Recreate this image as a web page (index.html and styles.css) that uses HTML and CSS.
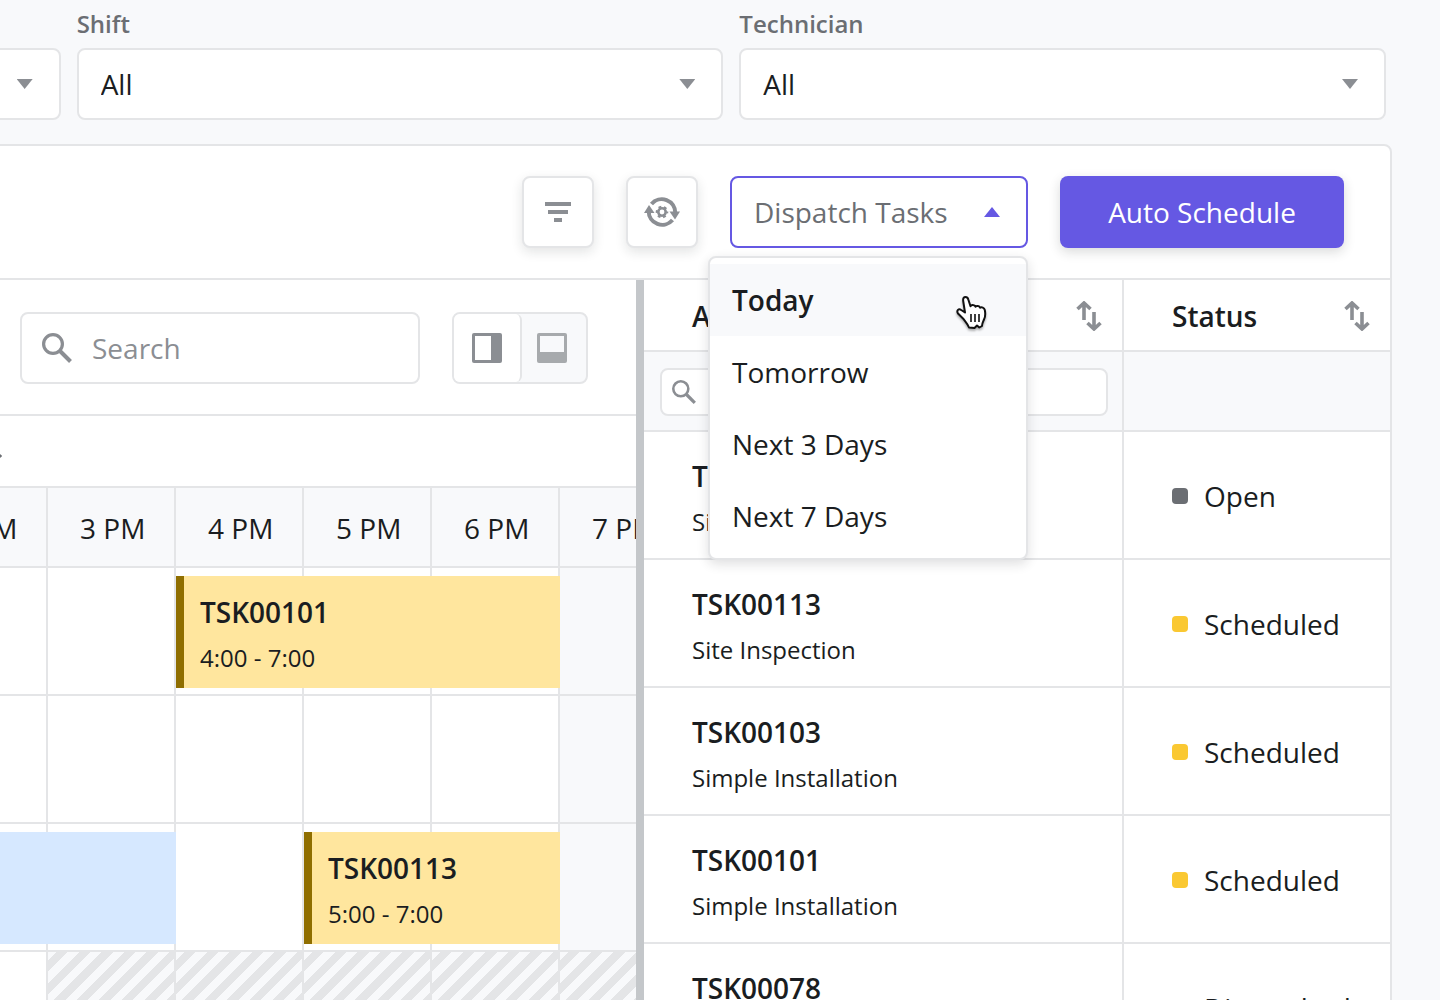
FILE: index.html
```html
<!DOCTYPE html>
<html lang="en">
<head>
    <meta charset="UTF-8">
    <meta name="viewport" content="width=device-width, initial-scale=1.0">
    <title>Dispatch Schedule</title>
    <link rel="stylesheet" href="styles.css">
</head>
<body>

<svg class="sprite" aria-hidden="true">
    <symbol id="icon-search" viewBox="0 0 30 30">
        <circle cx="11" cy="11" r="9.4" fill="none" stroke="currentColor" stroke-width="3.2"/>
        <path d="M17.5 17.5 28.5 28.5" stroke="currentColor" stroke-width="4"/>
    </symbol>
    <symbol id="icon-sort" viewBox="0 0 26 30">
        <path d="M8 19V2.5M1.5 8 8 2l6.5 6M18 11v16.5M11.5 22l6.500 6 6.500-6" fill="none" stroke="currentColor" stroke-width="3.6"/>
    </symbol>
</svg>

<div class="filters">
    <div class="filter">
        <label for="territory">Territory</label>
        <div class="select-box">
            <select id="territory"><option>All</option></select>
        </div>
    </div>
    <div class="filter">
        <label for="shift">Shift</label>
        <div class="select-box">
            <select id="shift"><option>All</option></select>
        </div>
    </div>
    <div class="filter">
        <label for="technician">Technician</label>
        <div class="select-box">
            <select id="technician"><option>All</option></select>
        </div>
    </div>
</div>

<div class="card">
    <div class="toolbar">
        <button class="icon-button" aria-label="Filter">
            <svg width="28" height="20" viewBox="0 0 28 20" fill="currentColor">
                <path d="M1 0h26v4H1zM4 8h20v4H4zM10 16h8v4h-8z"/>
            </svg>
        </button>
        <button class="icon-button" aria-label="Refresh settings">
            <svg width="36" height="32" viewBox="0 0 36 32">
                <g fill="none" stroke="currentColor" stroke-width="4">
                    <path d="M7.500 8A13.500 13.500 0 0 1 31.300 17"/>
                    <path d="M28.500 24A13.500 13.500 0 0 1 4.700 15"/>
                    <circle cx="18" cy="16" r="3.700" stroke-width="2.600"/>
                    <circle cx="18" cy="16" r="5.300" stroke-width="2" stroke-dasharray="2.800 2.750" stroke-dashoffset="1.400"/>
                </g>
                <path d="M0 17 5 9l5.500 8zM25.500 15.500H36l-5 8z" fill="currentColor"/>
            </svg>
        </button>
        <div class="dropdown">
            <button class="dropdown-button" aria-haspopup="true" aria-expanded="true">Dispatch Tasks</button>
            <div class="menu">
                <button class="menu-item active">Today</button>
                <button class="menu-item">Tomorrow</button>
                <button class="menu-item">Next 3 Days</button>
                <button class="menu-item">Next 7 Days</button>
                <svg class="pointer" width="34" height="36" viewBox="0 0 34 36">
                    <path d="M9 16.500 7.200 5C6.800 2 8 1 9.500 1s2.400 1 2.800 2.500l2.200 6.800c.3-1.800 4.200-2 5 .5.800-1.400 4-1.200 4.600 1 1.400-1.200 4.200-.2 4.700 2.200.6 3 .5 7-.8 9.500-1 2.300-1.800 3.500-2 6.500l-2.700 1.500-2.300-2-2.500 2.500-5.500-.5c-1.500-4-3.500-5.500-5.500-8.500L2 17.500c-1.800-3 .7-5.500 3.200-3.500z" fill="#fff" stroke="#111" stroke-width="2" stroke-linejoin="round"/>
                    <path d="M15 18v8M19 18v8M23 18v8" stroke="#111" stroke-width="1.600"/>
                </svg>
            </div>
        </div>
        <button class="primary-button">Auto Schedule</button>
    </div>

    <div class="panes">
        <div class="schedule">
            <div class="schedule-toolbar">
                <div class="search">
                    <svg width="30" height="30"><use href="#icon-search"/></svg>
                    <input type="text" placeholder="Search" aria-label="Search">
                </div>
                <div class="view-toggle">
                    <button class="selected" aria-label="Side view">
                        <svg width="30" height="30" viewBox="0 0 30 30">
                            <rect width="30" height="30" rx="2" fill="currentColor"/>
                            <path d="M3 3h16v24H3z" fill="#fff"/>
                        </svg>
                    </button>
                    <button aria-label="Bottom view">
                        <svg width="30" height="30" viewBox="0 0 30 30">
                            <rect width="30" height="30" rx="2" fill="currentColor"/>
                            <path d="M3 3h24v16H3z" fill="#f8f9fb"/>
                        </svg>
                    </button>
                </div>
            </div>
            <div class="date-bar">
                <button aria-label="Next day">
                    <svg width="12" height="18" viewBox="0 0 12 18"><path d="M2 2l8 7-8 7" fill="none" stroke="currentColor" stroke-width="3"/></svg>
                </button>
            </div>
            <div class="timeline">
                <div class="hours">
                    <span>2 PM</span>
                    <span>3 PM</span>
                    <span>4 PM</span>
                    <span>5 PM</span>
                    <span>6 PM</span>
                    <span>7 PM</span>
                </div>
                <div class="lane">
                    <div class="cells"><i></i><i></i><i></i><i></i><i></i><i class="off"></i></div>
                    <div class="event from-4pm">
                        <strong>TSK00101</strong>
                        <span>4:00 - 7:00</span>
                    </div>
                </div>
                <div class="lane">
                    <div class="cells"><i></i><i></i><i></i><i></i><i></i><i class="off"></i></div>
                </div>
                <div class="lane">
                    <div class="cells"><i></i><i></i><i></i><i></i><i></i><i class="off"></i></div>
                    <div class="event in-progress"></div>
                    <div class="event from-5pm">
                        <strong>TSK00113</strong>
                        <span>5:00 - 7:00</span>
                    </div>
                </div>
                <div class="lane">
                    <div class="cells"><i></i><i class="blocked"></i><i class="blocked"></i><i class="blocked"></i><i class="blocked"></i><i class="blocked"></i></div>
                </div>
            </div>
        </div>

        <div class="resizer"></div>

        <div class="tasks">
            <table>
                <thead>
                    <tr class="titles">
                        <th>
                            <div class="heading">All Tasks <svg width="26" height="30"><use href="#icon-sort"/></svg></div>
                        </th>
                        <th class="status-column">
                            <div class="heading">Status <svg width="26" height="30"><use href="#icon-sort"/></svg></div>
                        </th>
                    </tr>
                    <tr class="column-filters">
                        <td>
                            <div class="search small">
                                <svg width="24" height="24"><use href="#icon-search"/></svg>
                                <input type="text" aria-label="Search tasks">
                            </div>
                        </td>
                        <td></td>
                    </tr>
                </thead>
                <tbody>
                    <tr>
                        <td><strong>TSK00102</strong><span>Simple Installation</span></td>
                        <td><div class="status open">Open</div></td>
                    </tr>
                    <tr>
                        <td><strong>TSK00113</strong><span>Site Inspection</span></td>
                        <td><div class="status scheduled">Scheduled</div></td>
                    </tr>
                    <tr>
                        <td><strong>TSK00103</strong><span>Simple Installation</span></td>
                        <td><div class="status scheduled">Scheduled</div></td>
                    </tr>
                    <tr>
                        <td><strong>TSK00101</strong><span>Simple Installation</span></td>
                        <td><div class="status scheduled">Scheduled</div></td>
                    </tr>
                    <tr>
                        <td><strong>TSK00078</strong><span>Site Inspection</span></td>
                        <td><div class="status dispatched">Dispatched</div></td>
                    </tr>
                </tbody>
            </table>
        </div>
    </div>
</div>

</body>
</html>
```

FILE: styles.css
```css
* {
    margin: 0;
    padding: 0;
    box-sizing: border-box;
}

body {
    height: 100vh;
    overflow: hidden;
    background-color: #f8f9fb;
    color: #1a1d21;
    font-family: 'Open Sans', 'Noto Sans', sans-serif;
    font-size: 28px;
    line-height: 40px;
}

button, input, select {
    font: inherit;
    color: inherit;
    background: none;
    border: none;
    outline: none;
}

button {
    cursor: pointer;
}

svg {
    display: block;
    flex: none;
}

.sprite {
    position: absolute;
    width: 0;
    height: 0;
}

/* Filters: the first one is scrolled partly out of view */
.filters {
    display: grid;
    grid-template-columns: repeat(3, 1fr);
    gap: 16px;
    margin: 0 54px 0 -586px;
    padding: 4px 0 24px;
}

.filter label {
    display: block;
    height: 44px;
    color: #6b6e73;
    font-size: 24px;
    font-weight: 600;
}

.select-box {
    position: relative;
}

.select-box select {
    appearance: none;
    display: block;
    width: 100%;
    height: 72px;
    padding: 0 22px;
    background-color: #ffffff;
    border: 2px solid #e4e5e7;
    border-radius: 8px;
}

.select-box::after, .dropdown::after {
    content: "";
    position: absolute;
    top: 31px;
    right: 28px;
    width: 16px;
    height: 10px;
    background-color: #8b8e93;
    clip-path: polygon(0 0, 100% 0, 50% 100%);
    pointer-events: none;
}

.dropdown::after {
    background-color: #6558e3;
    clip-path: polygon(50% 0, 100% 100%, 0 100%);
}

.card {
    margin: 0 48px 0 -8px;
    padding-left: 6px;
    background-color: #ffffff;
    border: 2px solid #e4e5e7;
    border-radius: 8px;
}

.toolbar {
    display: flex;
    justify-content: flex-end;
    gap: 32px;
    padding: 30px 46px 30px 0;
    border-bottom: 2px solid #e4e5e7;
}

.icon-button {
    display: flex;
    align-items: center;
    justify-content: center;
    width: 72px;
    height: 72px;
    background-color: #ffffff;
    border: 2px solid #e4e5e7;
    border-radius: 8px;
    box-shadow: 0 4px 12px rgba(26, 29, 33, 0.12);
    color: #8b8e93;
}

.dropdown {
    position: relative;
}

.dropdown-button {
    width: 298px;
    height: 72px;
    padding: 0 22px;
    border: 2px solid #6558e3;
    border-radius: 8px;
    color: #6b6e73;
    text-align: left;
}

.menu {
    position: absolute;
    z-index: 2;
    top: 80px;
    right: 0;
    width: 320px;
    padding: 6px 0;
    background-color: #ffffff;
    border: 2px solid #e4e5e7;
    border-radius: 8px;
    box-shadow: 0 4px 12px rgba(26, 29, 33, 0.14);
}

.menu-item {
    display: block;
    width: 100%;
    height: 72px;
    padding: 0 22px;
    text-align: left;
}

.menu-item.active {
    background-color: #f8f9fb;
    font-weight: 600;
}

.pointer {
    position: absolute;
    top: 38px;
    right: 36px;
    filter: drop-shadow(0 2px 1px rgba(0, 0, 0, 0.3));
}

.primary-button {
    width: 284px;
    height: 72px;
    background-color: #6558e3;
    border-radius: 8px;
    box-shadow: 0 4px 12px rgba(26, 29, 33, 0.16);
    color: #ffffff;
}

.panes {
    display: grid;
    grid-template-columns: minmax(0, 636fr) 8px minmax(0, 746fr);
}

.resizer {
    background-color: #c4c7ca;
    cursor: col-resize;
}

/* Schedule */
.schedule {
    overflow: hidden;
}

.schedule-toolbar {
    display: flex;
    gap: 32px;
    padding: 32px 48px 30px 20px;
    border-bottom: 2px solid #e4e5e7;
}

.search {
    display: flex;
    flex: 1;
    align-items: center;
    gap: 20px;
    min-width: 0;
    height: 72px;
    padding: 0 20px;
    background-color: #ffffff;
    border: 2px solid #e4e5e7;
    border-radius: 8px;
    color: #8b8e93;
}

.search input {
    flex: 1;
    min-width: 0;
}

.search input::placeholder {
    color: #8b8e93;
    opacity: 1;
}

.search.small {
    gap: 8px;
    height: 48px;
    padding: 0 10px;
}

.view-toggle {
    display: flex;
    width: 136px;
    height: 72px;
    background-color: #f8f9fb;
    border: 2px solid #e4e5e7;
    border-radius: 8px;
}

.view-toggle button {
    display: flex;
    align-items: center;
    justify-content: center;
    width: 60px;
    color: #a7aaad;
}

.view-toggle .selected {
    width: 68px;
    background-color: #ffffff;
    border-right: 2px solid #e4e5e7;
    border-radius: 6px;
    color: #8b8e93;
}

.date-bar {
    display: flex;
    align-items: center;
    height: 72px;
    margin-left: -10px;
    padding-top: 10px;
    border-bottom: 2px solid #e4e5e7;
    color: #6b6e73;
}

/* The 2 PM column runs off the left edge */
.timeline {
    margin-left: -80px;
}

.hours, .lane, .cells {
    display: grid;
    grid-template-columns: repeat(6, 128px);
}

.hours span {
    height: 80px;
    padding-left: 32px;
    background-color: #f8f9fb;
    border-right: 2px solid #e4e5e7;
    border-bottom: 2px solid #e4e5e7;
    line-height: 80px;
}

/* Events share the lane's grid row with the cells and lie over them */
.cells {
    grid-row: 1;
    grid-column: 1 / -1;
}

.cells i {
    height: 128px;
    border-right: 2px solid #e4e5e7;
    border-bottom: 2px solid #e4e5e7;
}

.cells .off {
    background-color: #f8f9fb;
}

.cells .blocked {
    background: repeating-linear-gradient(135deg, #f8f9fb 0 6px, #e4e5e7 6px 14px, #f8f9fb 14px 16px) padding-box;
}

.event {
    display: flex;
    flex-direction: column;
    grid-row: 1;
    gap: 6px;
    height: 112px;
    margin-top: 8px;
    padding: 16px;
    background-color: #ffe69e;
    border-left: 8px solid #8f6e00;
}

.event strong, .tasks strong {
    font-weight: 600;
}

.event span, .tasks td span {
    font-size: 24px;
}

.from-4pm {
    grid-column: 3 / 6;
}

.from-5pm {
    grid-column: 4 / 6;
}

.in-progress {
    grid-column: 1 / 3;
    background-color: #d6e8ff;
    border-left-color: #1f6fd1;
}

/* Task table */
.tasks table {
    width: 100%;
    border-collapse: separate;
    border-spacing: 0;
    table-layout: fixed;
}

.tasks th, .tasks td {
    height: 128px;
    padding: 2px 16px 0 48px;
    border-right: 2px solid #e4e5e7;
    border-bottom: 2px solid #e4e5e7;
    text-align: left;
    vertical-align: middle;
}

.tasks th:last-child, .tasks td:last-child {
    border-right: none;
}

.tasks tbody td:first-child {
    padding-top: 8px;
}

.tasks .status-column {
    width: 266px;
}

.tasks .titles th {
    height: 72px;
    padding-right: 20px;
    font-weight: 600;
}

.tasks .column-filters td {
    height: 80px;
    padding: 16px 14px 0 16px;
    background-color: #f8f9fb;
    vertical-align: top;
}

.heading {
    display: flex;
    align-items: center;
    justify-content: space-between;
}

.heading svg {
    color: #8b8e93;
}

.tasks td strong, .tasks td span {
    display: block;
}

.tasks td span {
    margin-top: 6px;
}

.status {
    display: flex;
    align-items: center;
    gap: 16px;
}

.status::before {
    content: "";
    width: 16px;
    height: 16px;
    background-color: #6b6e73;
    border-radius: 4px;
}

.status.scheduled::before {
    background-color: #fac832;
}

.status.dispatched::before {
    background-color: #6558e3;
}
```
